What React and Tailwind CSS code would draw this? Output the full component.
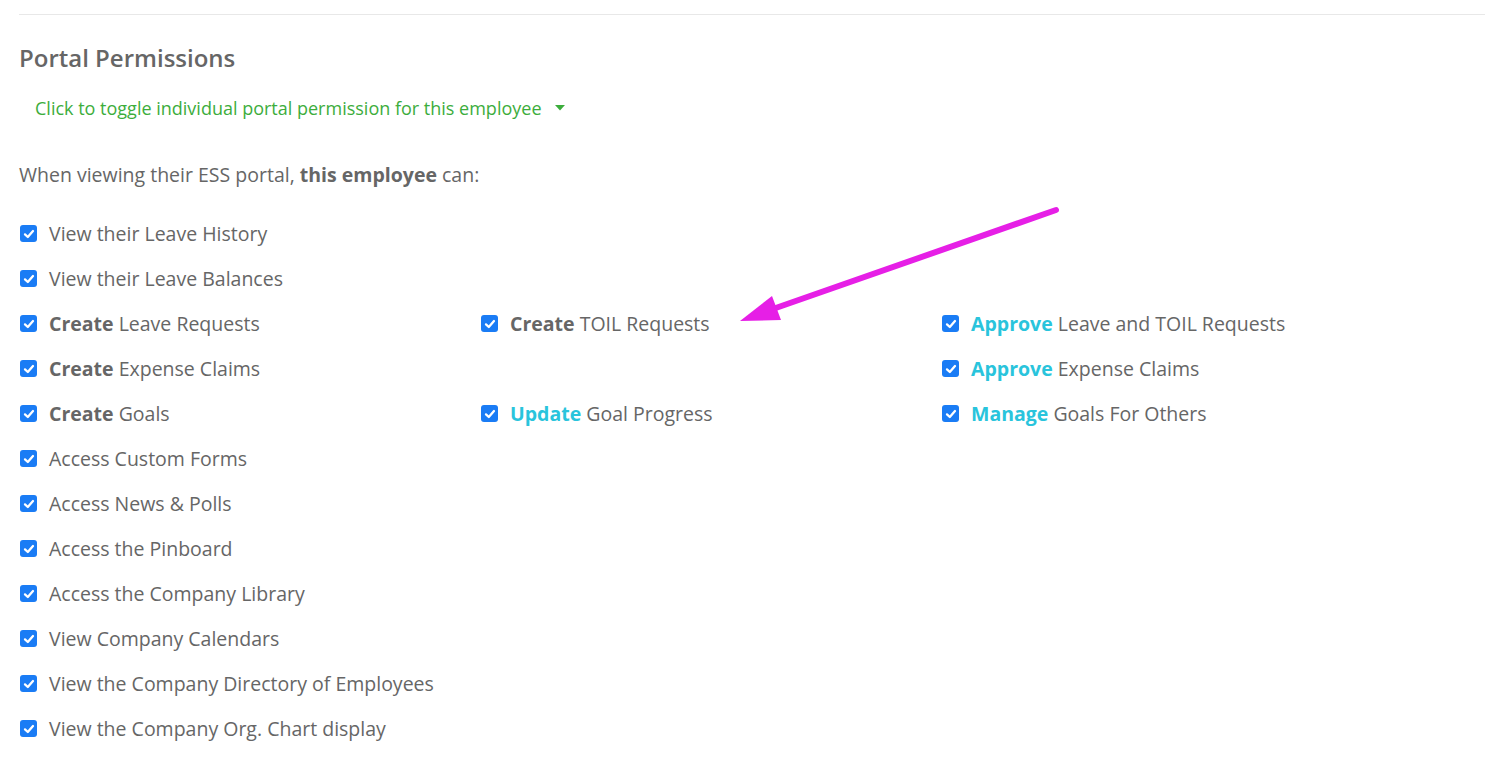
import React from "react";

const Check = () => (
  <span className="flex h-[17px] w-[17px] shrink-0 items-center justify-center rounded-[3px] bg-[#1a7cf5]">
    <svg width="12" height="12" viewBox="0 0 12 12" fill="none">
      <path d="M2 6.4 L4.8 9 L10 3" stroke="white" strokeWidth="2.3" strokeLinecap="round" strokeLinejoin="round" />
    </svg>
  </span>
);

const Item = ({ bold, accent, rest }) => (
  <div className="flex h-[45px] items-center gap-[12px] pl-[1px]">
    <Check />
    <span className="text-[19.5px] text-[#666]">
      {bold && (
        <b className={`font-bold ${accent ? "text-[#29c4dc]" : "text-[#666]"}`}>{bold} </b>
      )}
      {rest}
    </span>
  </div>
);

const Empty = () => <div className="h-[45px]" />;

export default function App() {
  return (
    <div className="relative h-[759px] w-[1485px] overflow-hidden bg-white pl-[19px]" style={{ fontFamily: '"Open Sans", sans-serif' }}>
      <div className="mt-[14px] border-t border-[#e8e8e8]" />
      <h2 className="mt-[27px] text-[24px] font-semibold leading-[32px] text-[#666]">Portal Permissions</h2>
      <div className="mt-[21px] flex items-center gap-[13px] pl-[16px] text-[18px] leading-[26px] text-[#3cad3c]">
        <span>Click to toggle individual portal permission for this employee</span>
        <svg width="10" height="6" viewBox="0 0 10 6"><path d="M0 0 H10 L5 5.5 Z" fill="#3cad3c" /></svg>
      </div>
      <p className="mt-[41px] text-[19.5px] leading-[26px] text-[#666]">
        When viewing their ESS portal, <b className="font-bold">this employee</b> can:
      </p>
      <div className="mt-[23px] grid grid-cols-[461px_461px_461px]">
        <div>
          <Item rest="View their Leave History" />
          <Item rest="View their Leave Balances" />
          <Item bold="Create" rest="Leave Requests" />
          <Item bold="Create" rest="Expense Claims" />
          <Item bold="Create" rest="Goals" />
          <Item rest="Access Custom Forms" />
          <Item rest="Access News & Polls" />
          <Item rest="Access the Pinboard" />
          <Item rest="Access the Company Library" />
          <Item rest="View Company Calendars" />
          <Item rest="View the Company Directory of Employees" />
          <Item rest="View the Company Org. Chart display" />
        </div>
        <div>
          <Empty />
          <Empty />
          <Item bold="Create" rest="TOIL Requests" />
          <Empty />
          <Item bold="Update" accent rest="Goal Progress" />
        </div>
        <div>
          <Empty />
          <Empty />
          <Item bold="Approve" accent rest="Leave and TOIL Requests" />
          <Item bold="Approve" accent rest="Expense Claims" />
          <Item bold="Manage" accent rest="Goals For Others" />
        </div>
      </div>
      <svg className="pointer-events-none absolute left-0 top-0" width="1485" height="759">
        <line x1="1056" y1="210" x2="770" y2="310" stroke="#e61fe6" strokeWidth="6" strokeLinecap="round" />
        <polygon points="740,321 772,296 781,320" fill="#e61fe6" />
      </svg>
    </div>
  );
}
